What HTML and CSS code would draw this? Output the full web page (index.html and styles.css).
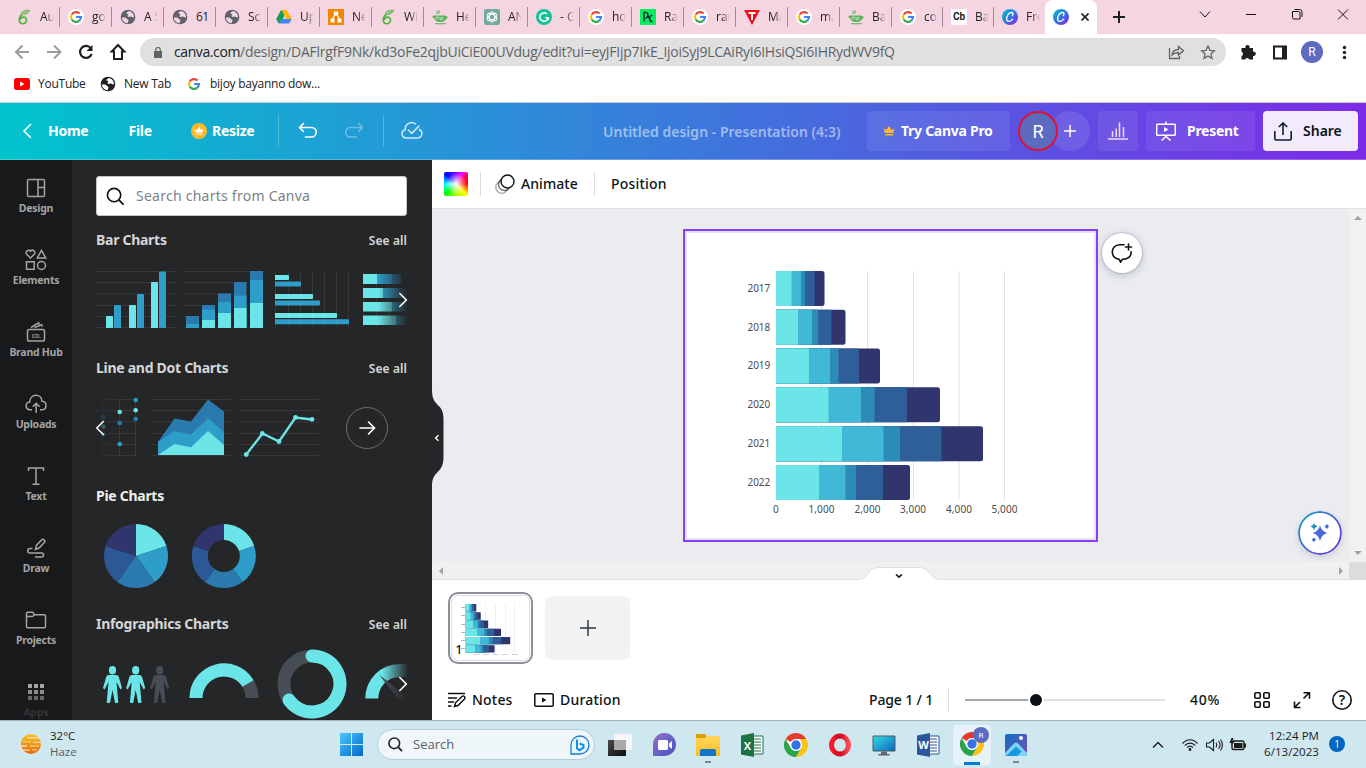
FILE: index.html
```html
<!DOCTYPE html>
<html lang="en">
<head>
<meta charset="utf-8">
<title>Untitled design - Presentation (4:3)</title>
<link rel="stylesheet" href="styles.css">
</head>
<body>
<svg class="sprite" aria-hidden="true">
  <defs>
    <linearGradient id="canvaGrad" x1="0" y1="0" x2="1" y2="1"><stop offset="0" stop-color="#00c4cc"/><stop offset=".45" stop-color="#2a7de0"/><stop offset="1" stop-color="#8b1fe8"/></linearGradient>
    <linearGradient id="fadeR" x1="0" x2="1"><stop offset="0" stop-color="#252627" stop-opacity="0"/><stop offset="1" stop-color="#252627"/></linearGradient>
    <linearGradient id="fadeL" x1="0" x2="1"><stop offset="0" stop-color="#252627"/><stop offset="1" stop-color="#252627" stop-opacity="0"/></linearGradient>
    <linearGradient id="sparkGrad" x1="0" y1="0" x2="1" y2="1"><stop offset="0" stop-color="#12a5b5"/><stop offset=".5" stop-color="#4a63dd"/><stop offset="1" stop-color="#7430d8"/></linearGradient>
    <linearGradient id="sunGrad" x1="0" y1="0" x2="0" y2="1"><stop offset="0" stop-color="#f9c51b"/><stop offset="1" stop-color="#e8660c"/></linearGradient>
    <linearGradient id="winGrad" x1="0" y1="0" x2="1" y2="1"><stop offset="0" stop-color="#4cc8fb"/><stop offset="1" stop-color="#0067c8"/></linearGradient>
    <linearGradient id="operaGrad" x1="0" x2="1"><stop offset="0" stop-color="#ff1b2d"/><stop offset=".5" stop-color="#c8081c"/><stop offset="1" stop-color="#ff4a52"/></linearGradient>
    <linearGradient id="chatGrad" x1="0" y1="0" x2="1" y2="1"><stop offset="0" stop-color="#9a6fc0"/><stop offset=".5" stop-color="#6a62c8"/><stop offset="1" stop-color="#4a50c0"/></linearGradient>
    <linearGradient id="screenGrad" x1="0" y1="0" x2="1" y2="1"><stop offset="0" stop-color="#35dbe4"/><stop offset="1" stop-color="#0a66c0"/></linearGradient>
    <linearGradient id="photoGrad" x1="0" y1="0" x2="1" y2="1"><stop offset="0" stop-color="#0f6fc5"/><stop offset="1" stop-color="#7c4bb0"/></linearGradient>
    <linearGradient id="folderGrad" x1="0" y1="0" x2="0" y2="1"><stop offset="0" stop-color="#ffd75a"/><stop offset="1" stop-color="#fcbc24"/></linearGradient>
    <linearGradient id="darkGrad" x1="0" y1="0" x2="1" y2="1"><stop offset="0" stop-color="#4a4a4a"/><stop offset="1" stop-color="#0c0c0c"/></linearGradient>
  </defs>
  <symbol id="google" viewBox="0 0 16 16"><circle cx="8" cy="8" r="8" fill="#fff"/><g fill="none" stroke-width="2.2"><path d="M11.6 4.6A5 5 0 0 0 3.7 5.5" stroke="#ea4335"/><path d="M3.7 5.5a5 5 0 0 0 0 5" stroke="#fbbc05"/><path d="M3.7 10.5a5 5 0 0 0 7.6 1.2" stroke="#34a853"/><path d="M8 8h5a5 5 0 0 1-1.7 3.7" stroke="#4285f4"/></g></symbol>
  <symbol id="globe" viewBox="0 0 16 16"><circle cx="8" cy="8" r="7.3" fill="currentColor"/><path d="M1.800 8.500c2-.2 4.200-.3 4.700.9.500 1.200 2 .7 2 2 0 .8-.9 1.300-.8 2.800A6 6 0 0 1 1.800 8.500zM9 2c-.8.800-2.800 1-2.600 2.200.2.900 1.700.4 1.900 1.300.2 1-1.300 1.100-.6 2 .8 1 1.900-.2 3.200 0 1 .2 1.300 1.300 3.100.8A6 6 0 0 0 9 2z" fill="var(--cut)"/></symbol>
  <symbol id="six" viewBox="0 0 16 16"><path d="M6 5.500C3.300 7.500 2.600 11 3.600 13c1.100 2.200 4.300 2.200 5.900.7 1.900-1.900 1.100-5-1.200-5.500-1.800-.3-3.600 1-4.300 2.600" fill="none" stroke="#4fb53b" stroke-width="1.700"/><path d="M5.500 6C4.500 3 8 .8 13.800 1.200 12.500 4.500 9.500 5.500 5.500 6z" fill="#6cc35a" stroke="#4fb53b" stroke-width=".6"/><path d="M6 5.300c1.500-1.500 3-2.300 5-2.800" stroke="#f6d5e3" stroke-width=".8" fill="none"/></symbol>
  <symbol id="cup" viewBox="0 0 16 16"><path d="M2 6.500h11l1.200.8 1.300.2-.3 2-2 1.300C12.500 12.300 11 13 8 13s-4.700-1.200-5.300-3L.5 8.300l.3-1.200z" fill="#55b257"/><path d="M3 14.800h11M7 5c-1.500-1.400 1-2 .1-3.800M5 4.500C4 3.500 5.400 3 4.900 1.800" stroke="#55b257" stroke-width="1.100" fill="none"/><path d="M4 8v2.500M4 8h2M6 8v2.500M8 8v2.500h1.600V8M11 8v2.500" stroke="#f6d5e3" stroke-width=".8" fill="none"/></symbol>
  <symbol id="canva" viewBox="0 0 16 16"><circle cx="8" cy="8" r="8" fill="url(#canvaGrad)"/><path d="M10.300 6.600c1.300-1.300.9-3.300-.9-3.100C6.500 3.800 4.300 7.300 4.600 10.200c.3 3.100 4 2.900 6.200 0" fill="none" stroke="#fff" stroke-width="1.300" stroke-linecap="round"/></symbol>
  <symbol id="chrome" viewBox="0 0 24 24"><circle cx="12" cy="12" r="12" fill="#fff"/><path d="M1.600 6A12 12 0 0 1 22.400 6H12a6 6 0 0 0-5.200 3z" fill="#e33b2e"/><path d="M22.400 6A12 12 0 0 1 12 24l5.200-9a6 6 0 0 0 0-6L16 6z" fill="#fbc21a"/><path d="M1.600 6A12 12 0 0 0 12 24l5.200-9A6 6 0 0 1 6.800 15z" fill="#2ba24c"/><circle cx="12" cy="12" r="5.800" fill="#fff"/><circle cx="12" cy="12" r="4.700" fill="#3273e8"/></symbol>
  <symbol id="crown" viewBox="0 0 12 10"><path d="M.5 2.200l2.700 1.900L6 0l2.800 4.100 2.700-1.900L10.300 7H1.700zM1.900 8h8.200v1.500H1.900z" fill="currentColor"/></symbol>
</svg>

<header class="browser">
  <div class="tabs">
    <div class="tab"><svg class="fav"><use href="#six"/></svg><span>Au</span></div>
    <div class="tab"><svg class="fav"><use href="#google"/></svg><span>go</span></div>
    <div class="tab"><svg class="fav grey"><use href="#globe"/></svg><span>A S</span></div>
    <div class="tab"><svg class="fav grey"><use href="#globe"/></svg><span class="whole">61</span></div>
    <div class="tab"><svg class="fav grey"><use href="#globe"/></svg><span>Sc</span></div>
    <div class="tab"><svg class="fav" viewBox="0 0 16 16"><path d="M5.300 1h5.400L5.300 14H2.800L.3 10z" fill="#1ea362"/><path d="M5.300 1h5.400l5 9h-5.200z" fill="#ffba00"/><path d="M2.800 14.500L5.400 10h10.300l-2.600 4.500z" fill="#4285f4"/><path d="M.3 10L5.300 1 8 5.600 2.800 14.500z" fill="#12a05c"/></svg><span>Up</span></div>
    <div class="tab"><svg class="fav" viewBox="0 0 16 16"><path d="M0 0h16v16H0z" fill="#f08705"/><path d="M8 4L4 11M8 4l4 7" fill="none" stroke="#fff" stroke-width="1.200"/><path d="M5.800 2.500h4.400v4H5.800zM2.500 9.500h4v4h-4zM9.500 9.500h4v4h-4z" fill="#fff"/></svg><span>Ne</span></div>
    <div class="tab"><svg class="fav"><use href="#six"/></svg><span>Wi</span></div>
    <div class="tab"><svg class="fav"><use href="#cup"/></svg><span>He</span></div>
    <div class="tab"><svg class="fav" viewBox="0 0 16 16"><rect width="16" height="16" rx="2" fill="#74aa9c"/><g fill="none" stroke="#fff" stroke-width=".9"><ellipse cx="8" cy="8" rx="2.700" ry="5.300"/><ellipse cx="8" cy="8" rx="2.700" ry="5.300" transform="rotate(60 8 8)"/><ellipse cx="8" cy="8" rx="2.700" ry="5.300" transform="rotate(120 8 8)"/></g></svg><span>AN</span></div>
    <div class="tab"><svg class="fav" viewBox="0 0 16 16"><circle cx="8" cy="8" r="8" fill="#15c39a"/><path d="M10.800 4.900a4.200 4.200 0 1 0 1.400 3.800H9.300M12.200 8.500v2.600" fill="none" stroke="#fff" stroke-width="1.500"/></svg><span>- G</span></div>
    <div class="tab"><svg class="fav"><use href="#google"/></svg><span>ho</span></div>
    <div class="tab"><svg class="fav" viewBox="0 0 16 16"><path d="M0 0h16v16H0z" fill="#03ef62"/><path d="M4 12.500V3.500c4.500-1 5.500 3.500 1.500 6M12.500 6.500c-2.500-.5-4 3-2 5l2 1.500M8 7l3 6" fill="none" stroke="#05192d" stroke-width="1.300"/></svg><span>Ra</span></div>
    <div class="tab"><svg class="fav"><use href="#google"/></svg><span>ran</span></div>
    <div class="tab"><svg class="fav" viewBox="0 0 16 16"><path d="M0 1h16L8 16z" fill="#f30b16"/><path d="M4.500 4h7M8 4v7" stroke="#fff" stroke-width="2"/></svg><span>Ma</span></div>
    <div class="tab"><svg class="fav"><use href="#google"/></svg><span>ma</span></div>
    <div class="tab"><svg class="fav"><use href="#cup"/></svg><span>Ba</span></div>
    <div class="tab short"><svg class="fav"><use href="#google"/></svg><span>co</span></div>
    <div class="tab short"><b class="fav cb">Cb</b><span>Ba</span></div>
    <div class="tab short last"><svg class="fav"><use href="#canva"/></svg><span>Fre</span></div>
    <div class="tab active"><svg class="fav"><use href="#canva"/></svg><svg class="close" viewBox="0 0 8 8"><path d="M.5.5l7 7m0-7l-7 7" stroke="#222" stroke-width="1.700"/></svg></div>
    <svg class="newtab" viewBox="0 0 12 12"><path d="M6 0v12M0 6h12" stroke="#1f1f1f" stroke-width="2"/></svg>
    <svg class="winctl" viewBox="1190 0 176 34"><g fill="none" stroke="#111" stroke-width="1"><path d="M1200 11.500l5 5.500 5-5.500M1246 14.500h10M1292.500 11.500h6q1.500 0 1.500 1.500v6h-6q-1.500 0-1.500-1.500zM1294.500 9.500h5q2.500 0 2.500 2.500v5M1338 9.500l10 10m0-10l-10 10"/></g></svg>
  </div>
  <div class="navbar">
    <svg class="navicons" viewBox="0 34 140 36"><g fill="none" stroke="#9b9b9b" stroke-width="2"><path d="M29 52H16.500M22.500 45.500L16 52l6.500 6.500M47 52h13M54 45.500l6.500 6.500-6.500 6.500"/></g><path d="M91 48.500a6 6 0 1 0 .7 5.500" fill="none" stroke="#1f1f1f" stroke-width="2.200"/><path d="M92.500 45v6h-6z" fill="#1f1f1f"/><path d="M118 45l-6.300 6.500h2.300V59h8v-7.500h2.300z" fill="none" stroke="#1f1f1f" stroke-width="2"/></svg>
    <div class="omnibox">
      <svg class="lock" viewBox="0 0 8 11"><path d="M0 4h8v7H0z" fill="#5f6368"/><path d="M1.700 4V2.800a2.300 2.300 0 0 1 4.600 0V4" fill="none" stroke="#5f6368" stroke-width="1.200"/></svg>
      <span class="url"><b>canva.com</b>/design/DAFlrgfF9Nk/kd3oFe2qjbUiCiE00UVdug/edit?ui=eyJFIjp7IkE_IjoiSyJ9LCAiRyI6IHsiQSI6IHRydWV9fQ</span>
      <svg class="omnicons" viewBox="1166 38 54 28"><g fill="none" stroke="#5f6368" stroke-width="1.300"><path d="M1169.500 48v10.500h10V56M1172 55c.5-4 3-5.500 6.500-5.500V46.500l5 4.200-5 4.300v-2.500c-2.500 0-4.500.5-6.500 2.500z"/><path d="M1208 46l1.900 4.300 4.500.4-3.400 3.100 1 4.600-4-2.400-4 2.400 1-4.600-3.400-3.100 4.500-.4z"/></g></svg>
    </div>
    <svg class="exticons" viewBox="1226 34 140 36"><path d="M1241.500 48h4a2.200 2.200 0 1 1 4 0h3.500v3.700a2.200 2.200 0 1 1 0 4.200v3.600h-3.700a2.200 2.200 0 0 0-4.200 0h-3.600V56a2.200 2.200 0 0 0 0-4.200z" fill="#1f1f1f"/><path d="M1274 46.500h12v12h-12z" fill="#fff" stroke="#1f1f1f" stroke-width="2"/><path d="M1282 46h5v13h-5z" fill="#1f1f1f"/><circle cx="1312" cy="52" r="11" fill="#5c6bc0"/><text x="1312" y="56.300" class="profile">R</text><g fill="#1f1f1f"><circle cx="1344.500" cy="47.500" r="1.700"/><circle cx="1344.500" cy="52.500" r="1.700"/><circle cx="1344.500" cy="57.500" r="1.700"/></g></svg>
  </div>
  <nav class="bookmarks">
    <svg class="yt" viewBox="0 0 16 12"><rect width="16" height="12" rx="2.500" fill="#f00"/><path d="M6 3.500v5l4.500-2.500z" fill="#fff"/></svg><span class="bm1">YouTube</span>
    <svg class="fav dark"><use href="#globe"/></svg><span class="bm2">New Tab</span>
    <svg class="fav"><use href="#google"/></svg><span class="bm3">bijoy bayanno dow...</span>
  </nav>
</header>

<div class="appbar">
  <svg class="back" viewBox="0 0 10 16"><path d="M8.500 1.500L2 8l6.500 6.500" fill="none" stroke="#fff" stroke-width="1.600" stroke-linecap="round"/></svg>
  <span class="home">Home</span><span class="file">File</span>
  <span class="crownbadge"><svg viewBox="0 0 12 10"><use href="#crown"/></svg></span><span class="resize">Resize</span>
  <i class="vline"></i>
  <svg class="hist" viewBox="290 103 140 56"><g fill="none" stroke="#fff" stroke-width="1.600" stroke-linecap="round" stroke-linejoin="round"><path d="M303.500 123.500l-4 4 4 4M300 127.500h11.500a4.700 4.700 0 0 1 0 9.500h-6"/><path opacity=".35" d="M358.500 123.500l4 4-4 4M362 127.500h-11.500a4.700 4.700 0 0 0 0 9.500h6"/><path opacity=".25" stroke-width="1" stroke-linecap="butt" d="M383.500 115v32"/><path opacity=".8" stroke-width="1.500" d="M419.500 129.500c4 2.500 2.800 8.500-2.500 8.500h-10c-6 0-6.700-6.700-1.800-8.300-.5-6 6.300-9 10.300-5.700M408.500 130l3.200 3.400L419 126"/></g></svg>
  <span class="title">Untitled design - Presentation (4:3)</span>
  <span class="btn pro"><svg viewBox="0 0 12 10"><use href="#crown"/></svg><span>Try Canva Pro</span></span>
  <span class="people"><span class="avatar">R</span><span class="invite"><svg viewBox="0 0 12 12"><path d="M6 0v12M0 6h12" stroke="#fff" stroke-width="1.500"/></svg></span></span>
  <span class="btn stats"><svg viewBox="0 0 20 18"><path d="M0 17h20M4.500 15V9M8.200 15V6.500M11.500 15V.5M15.500 15V5" stroke="#eadcff" stroke-width="1.500"/></svg></span>
  <span class="btn present"><svg viewBox="0 0 20 20"><path d="M1.500 3.200h17q.8 0 .8.800v9.500q0 .8-.8.800h-17q-.8 0-.8-.8V4q0-.8.8-.8zM10 .5v2.500M5.500 19.500l4.500-4 4.500 4" fill="none" stroke="#fff" stroke-width="1.500"/><path d="M8 6l4.500 2.500L8 11z" fill="#fff"/></svg><span>Present</span></span>
  <span class="btn share"><svg viewBox="0 0 18 19"><path d="M.8 9v7.500q0 1.500 1.500 1.500h13.400q1.500 0 1.500-1.500V9M9 13V1M4.800 5L9 1l4.200 4" fill="none" stroke="#111b26" stroke-width="1.600"/></svg><span>Share</span></span>
</div>

<main class="editor">
  <nav class="rail">
    <a><svg viewBox="0 0 24 24"><g><rect x="3.500" y="3.500" width="17" height="17" rx="1.500"/><path d="M14 3.500v17M14 11.500h6.500"/></g></svg>Design</a>
    <a><svg viewBox="0 0 24 24"><path d="M6.500 10L2.700 6.200a2.400 2.400 0 0 1 3.800-3 2.400 2.400 0 0 1 3.800 3zM17.500 2.300L21.700 10h-8.400zM2.500 13.800h7.700v7.400H2.500z"/><circle cx="17.500" cy="17.500" r="4"/></svg>Elements</a>
    <a><svg viewBox="0 0 24 24"><rect x="3.500" y="9.500" width="17" height="11.500" rx="1.800"/><path d="M7 7.500l7.500-4.600 1 1.600M10.500 7.500l7-2.800 1 2"/><text x="12.200" y="17.500">CO.</text></svg>Brand Hub</a>
    <a><svg viewBox="0 0 24 24"><path d="M8 17.800H6.500c-5.500 0-5.800-7.300-.8-7.800C6 1 17.500 1 18 9.300c5.500.3 5.300 8.500-.5 8.500H16M12.200 21v-9.300M8.800 14.700l3.400-3.300 3.400 3.300"/></svg>Uploads</a>
    <a><svg viewBox="0 0 24 24"><path d="M4.500 7V4h15v3M12 4v16.300M8.500 20.300h7"/></svg>Text</a>
    <a><svg viewBox="0 0 24 24"><path d="M8.500 12.500H6c-3 0-3 4.500 0 4.500h11.500c3 0 2.700 4-.2 4H11M11.500 13.500l1-4.300 5-5.200c1.800-1.800 4.500.8 2.800 2.600l-5 5.200z"/></svg>Draw</a>
    <a><svg viewBox="0 0 24 24"><path d="M2.500 18.500V5.500q0-1.200 1.200-1.200h5l2 2.500h9.600q1.200 0 1.200 1.200v10.500q0 1.200-1.200 1.200H3.700q-1.200 0-1.200-1.200zM2.500 8.500h6l2-1.700"/></svg>Projects</a>
    <a class="apps"><svg viewBox="0 0 24 24"><path d="M4 4h4v4H4zM10 4h4v4h-4zM16 4h4v4h-4z" fill="#a4a5a6"/><path d="M4 10h4v4H4zM10 10h4v4h-4zM16 10h4v4h-4z" fill="#8b8c8d"/><path d="M4 16h4v4H4zM10 16h4v4h-4zM16 16h4v4h-4z" fill="#68696a"/></svg>Apps</a>
  </nav>

  <aside class="panel">
    <div class="search"><svg viewBox="0 0 20 20"><circle cx="8.500" cy="8.500" r="7" fill="none" stroke="#0d1216" stroke-width="1.700"/><path d="M13.500 13.500l5 5" stroke="#0d1216" stroke-width="1.900"/></svg><span>Search charts from Canva</span></div>

    <section><h2>Bar Charts</h2><span class="all">See all</span>
      <svg class="thumbs" viewBox="96 260 312 80">
        <path class="rule" d="M96 271.500h80M96 282.500h80M96 294h80M96 305.500h80M96 316.500h80M96 327.500h80M184 271.500h80M184 282.500h80M184 294h80M184 305.500h80M184 316.500h80M184 327.500h80"/>
        <path class="c1" d="M106 328v-11q0-1 1-1h5q1 0 1 1v11zM129 328v-22q0-1 1-1h5q1 0 1 1v22zM151 328v-45q0-1 1-1h5q1 0 1 1v45z"/>
        <path class="c2" d="M114 328v-22q0-1 1-1h5q1 0 1 1v22zM137 328v-33q0-1 1-1h5q1 0 1 1v33zM159 328v-55.500q0-1 1-1h5q1 0 1 1V328z"/>
        <path class="c3" d="M186 328v-12h13v12zM202 328v-23h13v23zM218 328v-34.500h13V328zM234 328v-46h12.500v46zM250 328v-57h13v57z"/>
        <path class="c2" d="M186 328v-4h13v4zM202 328v-18.500h13V328zM218 328v-26h13v26zM234 328v-32.500h12.500V328zM250 328v-48h13v48z"/>
        <path class="c1" d="M202 328v-8h13v8zM218 328v-15h13v15zM234 328v-20h12.500v20zM250 328v-25h13v25z"/>
        <path class="rule" d="M275.500 272v55M288.500 272v55M300.500 272v55M312.500 272v55M324.500 272v55M336.500 272v55M348.500 272v55M363.500 272v55M376.500 272v55M388.500 272v55"/>
        <path class="c1" d="M275 275h13q1 0 1 1v3q0 1-1 1h-13zM275 294h37q1 0 1 1v3q0 1-1 1h-37zM275 313h61q1 0 1 1v3q0 1-1 1h-61z"/>
        <path class="c2" d="M275 281.500h25q1 0 1 1v3q0 1-1 1h-25zM275 300.500h44q1 0 1 1v3q0 1-1 1h-44zM275 319.300h73q1 0 1 1v3q0 1-1 1h-73z"/>
        <path class="c3" d="M391 274h10v10h-10zM397 288h10v10h-10z"/><path class="c2" d="M377 274h15v10h-15zM383 288h15v10h-15zM392 302h15v9.500h-15zM396 315.500h11v9.500h-11z"/>
        <path class="c1" d="M363 274h14v10h-14zM363 288h20v10h-20zM363 302h29v9.500h-29zM363 315.500h33v9.500h-33z"/>
        <path d="M378 268h30v62h-30z" fill="url(#fadeR)"/><path class="arrow" d="M399.800 293.500l6.500 6.500-6.500 6.500"/>
      </svg></section>

    <section><h2>Line and Dot Charts</h2><span class="all">See all</span>
      <svg class="thumbs" viewBox="96 388 312 80">
        <path class="rule" d="M96 399.500h41M96 410.500h41M96 422h41M96 433.500h41M96 444.500h41M96 455.500h41M103 399v57M119.500 399v57M135.500 399v57M151 399.500h80M151 410.500h80M151 422h80M151 433.500h80M151 444.500h80M151 455.500h80M239 399.500h80M239 410.500h80M239 422h80M239 433.500h80M239 444.500h80M239 455.500h80"/>
        <circle class="c3" cx="103" cy="417" r="2.300"/><circle class="c1" cx="103" cy="426.500" r="2.300"/><circle class="c2" cx="103" cy="434.500" r="2.300"/>
        <path d="M96 390h24v70H96z" fill="url(#fadeL)"/>
        <circle class="c1" cx="119.700" cy="412" r="2.300"/><circle class="c3" cx="119.700" cy="423" r="2.300"/><circle class="c2" cx="119.700" cy="444" r="2.300"/><circle class="c2" cx="135.700" cy="400" r="2.300"/><circle class="c1" cx="135.700" cy="410.200" r="2.300"/><circle class="c3" cx="135.700" cy="419" r="2.300"/>
        <path class="arrow" d="M103.300 421.500L96.800 428l6.500 6.500"/>
        <path class="c3" d="M158 455v-13l16.500-23.500 16.500 3 17-22 16 12V455z"/><path class="c2" d="M158 455v-13l16.500-11 16.500 3.500 17-16.200L224 432v23z"/><path class="c1" d="M158 455l16.500-11 16.500 3.200 17-16.200 16 14v10z"/>
        <path d="M246.300 454.500l16.200-21 16.500 8 16.500-24 16.500 2" fill="none" stroke="#6ce5e8" stroke-width="2.300"/><g class="c1"><circle cx="246.300" cy="454.500" r="2.400"/><circle cx="262.300" cy="433.500" r="2.400"/><circle cx="279" cy="441.500" r="2.400"/><circle cx="295.500" cy="417.500" r="2.400"/><circle cx="312" cy="419.300" r="2.400"/></g>
        <circle cx="367" cy="428" r="20.500" fill="none" stroke="#6d6e6f"/><path class="arrow" d="M360 428h14M368.500 422l6 6-6 6"/>
      </svg></section>

    <section class="pies"><h2>Pie Charts</h2>
      <svg class="thumbs" viewBox="96 516 312 80">
        <g id="pie"><path fill="#6ce5e8" d="M136 556V524a32 32 0 0 1 30.430 22.110z"/><path fill="#2f9dc9" d="M136 556l30.430-9.890A32 32 0 0 1 154.810 581.890z"/><path fill="#2a7ab0" d="M136 556l18.810 25.890a32 32 0 0 1-37.620 0z"/><path fill="#2d5896" d="M136 556l-18.810 25.890A32 32 0 0 1 105.570 546.110z"/><path fill="#31356e" d="M136 556l-30.430-9.890A32 32 0 0 1 136 524z"/></g>
        <use href="#pie" x="87.800"/><circle cx="223.800" cy="556" r="16" fill="#252627"/>
      </svg></section>

    <section><h2>Infographics Charts</h2><span class="all">See all</span>
      <svg class="thumbs" viewBox="96 644 312 80">
        <g id="person" fill="#6ce5e8"><ellipse cx="112.500" cy="670.300" rx="3.600" ry="4.200"/><path d="M109 675h7c2 0 2.500 1 3 2.500l3 10.500-1.500 1.500-4-7.500 1.800 20.700-3.300.3-2.500-13-2.500 13-3.300-.3 1.800-20.700-4 7.500-1.500-1.500 3-10.500c.5-1.500 1-2.500 3-2.500z"/></g>
        <use href="#person" x="23.200"/><g fill="#464d55"><ellipse cx="159.700" cy="670.300" rx="3.600" ry="4.200"/><path d="M156.200 675h7c2 0 2.500 1 3 2.500l3 10.500-1.500 1.500-4-7.500 1.800 20.700-3.300.3-2.500-13-2.500 13-3.300-.3 1.800-20.700-4 7.500-1.500-1.500 3-10.500c.5-1.500 1-2.500 3-2.500z"/></g>
        <g fill="none" stroke-width="13"><path stroke="#464d55" d="M196 698a28 28 0 0 1 56 0"/><path stroke="#6ce5e8" d="M196 698a28 28 0 0 1 52-14.500"/><circle cx="312" cy="684" r="28" stroke="#464d55"/><path stroke="#6ce5e8" stroke-linecap="round" d="M312 656a28 28 0 1 1-23 44"/><path stroke="#6ce5e8" d="M371.800 698.500a28 28 0 0 1 28-28h8"/></g>
        <path d="M379 674.500l24 19a4 4 0 0 1-5 5.500z" fill="#464d55"/><path d="M382 660h26v42h-26z" fill="url(#fadeR)"/><path class="arrow" d="M399.800 677.500l6.500 6.500-6.500 6.500"/>
      </svg></section>
  </aside>

  <div class="work">
    <div class="tools"><i class="swatch"></i><i class="div"></i><svg class="anim" viewBox="0 0 20 20"><g fill="#fff" stroke="#0d1216" stroke-width="1.400"><circle cx="6.800" cy="13.200" r="6" opacity=".35"/><circle cx="9.500" cy="10.500" r="6" opacity=".6"/><circle cx="12.500" cy="7.500" r="6.500"/></g></svg><span class="animate">Animate</span><i class="div"></i><span class="position">Position</span></div>
    <div class="stage">
      <svg class="page" viewBox="683 229 415 313">
        <path d="M684 230h413v311H684z" fill="#e3e5ea" stroke="#8b3dff" stroke-width="2"/><path d="M687 233h407v305H687z" fill="#fff"/>
        <path d="M821.500 271v229M867.500 271v229M913.500 271v229M959 271v229M1004.500 271v229" stroke="#e1e1e3"/>
        <g id="bars">
          <g fill="#31356e"><path d="M776 271h46q2.500 0 2.500 2.500v30q0 2.500-2.500 2.500h-46zM776 309.700h67q2.500 0 2.500 2.500v30q0 2.500-2.500 2.500h-67zM776 348.500h101.500q2.500 0 2.500 2.500v30q0 2.500-2.500 2.500H776zM776 387.300h161.500q2.500 0 2.500 2.500v30q0 2.500-2.500 2.500H776zM776 426.300h204.500q2.500 0 2.500 2.500v30q0 2.500-2.500 2.500H776zM776 465h131.500q2.500 0 2.500 2.500v30q0 2.500-2.500 2.500H776z"/></g>
          <path fill="#2f5f98" d="M776 271h38.500v35H776zM776 309.700h55.500v35H776zM776 348.500h83v35h-83zM776 387.300h131v35H776zM776 426.300h165.500v35H776zM776 465h107v35H776z"/>
          <path fill="#2d8bba" d="M776 271h29v35h-29zM776 309.700h42v35h-42zM776 348.500h62.500v35H776zM776 387.300h98.500v35H776zM776 426.300h124v35H776zM776 465h80v35h-80z"/>
          <path fill="#41b8d5" d="M776 271h25v35h-25zM776 309.700h36v35h-36zM776 348.500h54v35h-54zM776 387.300h85v35h-85zM776 426.300h107.500v35H776zM776 465h69.500v35H776z"/>
          <path fill="#6ce5e8" d="M776 271h15.500v35H776zM776 309.700h22v35h-22zM776 348.500h33v35h-33zM776 387.300h52.500v35H776zM776 426.300h66v35h-66zM776 465h43v35h-43z"/>
        </g>
        <g class="ylab"><text x="770" y="292">2017</text><text x="770" y="331">2018</text><text x="770" y="369">2019</text><text x="770" y="408">2020</text><text x="770" y="447">2021</text><text x="770" y="486">2022</text></g>
        <g class="xlab"><text x="776" y="513">0</text><text x="821.500" y="513">1,000</text><text x="867.500" y="513">2,000</text><text x="913" y="513">3,000</text><text x="959" y="513">4,000</text><text x="1004.500" y="513">5,000</text></g>
      </svg>
      <span class="comment"><svg viewBox="0 0 22 20"><path d="M13 1.700H8.500C-1 1.700-1 16 8 16.200l1.500 2.800 2-2.800c6 0 9-3 8.500-7.500M17.500 1v6M14.500 4h6" fill="none" stroke="#0d1216" stroke-width="1.600" stroke-linecap="round"/></svg></span>
      <svg class="magic" viewBox="0 0 44 44"><circle cx="22" cy="22" r="21" fill="#fff" stroke="url(#sparkGrad)" stroke-width="2"/><path d="M22 14.500q1.500 6 7.500 7.500-6 1.500-7.500 8-1.500-6.500-7.500-8 6-1.500 7.500-7.500z" fill="#4868dc"/><path d="M16 12q.6 3 3.500 3.500-2.900.5-3.500 3.500-.6-3-3.500-3.500 2.900-.5 3.500-3.500z" fill="#198fb5"/><path d="M29 13l2 2.500-2 2.500-2.500-2.500zM16 26.500l2 2.300-2 2.200-2.300-2.200z" fill="#4868dc"/></svg>
      <div class="vscroll"><svg viewBox="0 0 8 5"><path d="M0 5l4-4 4 4z" fill="#a3a3a3"/></svg><svg viewBox="0 0 8 5"><path d="M0 0l4 4 4-4z" fill="#a3a3a3"/></svg></div>
    </div>
    <div class="hscroll"><svg viewBox="0 0 5 8"><path d="M5 0L1 4l4 4z" fill="#a3a3a3"/></svg><svg viewBox="0 0 5 8"><path d="M0 0l4 4-4 4z" fill="#a3a3a3"/></svg><i></i>
      <svg class="bump" viewBox="855 566 88 15"><path d="M855 579.500c8 0 9.500-2 13-6 3-3.500 5.500-6 11-6h40c5.500 0 8 2.500 11 6 3.500 4 5 6 13 6v1.500h-88z" fill="#fff"/><path d="M855 579.500c8 0 9.500-2 13-6 3-3.500 5.500-6 11-6h40c5.500 0 8 2.500 11 6 3.500 4 5 6 13 6" fill="none" stroke="#dddee0"/><path d="M896 574.500l3 2.700 3-2.700" fill="none" stroke="#111" stroke-width="1.600"/></svg>
    </div>
    <div class="pages">
      <div class="pagethumb"><svg viewBox="448 592 85 72">
        <rect x="451.500" y="595.500" width="78" height="65" rx="6" fill="#fff" stroke="#dadde3"/>
        <path d="M485.500 604v48M495.500 604v48M505.500 604v48M514.500 604v48" stroke="#f1f1f3"/><path d="M461 607.500h4M461 615.500h4M461 624.500h4M461 632.500h4M461 640.500h4M461 648.500h4" stroke="#b7b9bd"/><path d="M474 654.500h6M483 654.500h6M493 654.500h6M502 654.500h6M512 654.500h6" stroke="#d0d1d4"/>
        <use href="#bars" transform="translate(299.400 546.800) scale(.2145 .2115)"/><text x="455.500" y="654" class="num">1</text></svg></div>
      <div class="addpage"><svg viewBox="0 0 16 16"><path d="M8 0v16M0 8h16" stroke="#33373d" stroke-width="1.500"/></svg></div>
    </div>
    <footer class="status">
      <svg class="ni" viewBox="0 0 18 16"><path d="M0 1.500h17M0 6h9M0 10h6M0 14h3.500M6.500 14.500l1-3.700L14 4.500q1.300-1 2.400 0t.1 2.500L10 13.500z" fill="none" stroke="#0d1216" stroke-width="1.500"/></svg><span class="notes">Notes</span>
      <svg class="di" viewBox="0 0 20 14"><rect x=".8" y=".8" width="18.400" height="12.400" rx="1.200" fill="none" stroke="#0d1216" stroke-width="1.500"/><path d="M8 4.500v5l4.500-2.500z" fill="#0d1216"/></svg><span class="duration">Duration</span>
      <span class="count">Page 1 / 1</span><i class="div"></i>
      <div class="slider"><i class="done"></i><b></b><i class="rest"></i></div><span class="zoom">40%</span>
      <svg class="end" viewBox="1250 684 104 32"><g fill="none" stroke="#0d1216" stroke-width="1.600"><rect x="1254.800" y="692.800" width="5.400" height="5.400" rx="1"/><rect x="1263.800" y="692.800" width="5.400" height="5.400" rx="1"/><rect x="1254.800" y="701.800" width="5.400" height="5.400" rx="1"/><rect x="1263.800" y="701.800" width="5.400" height="5.400" rx="1"/><path d="M1303.500 698.500l5.500-5.500M1303.500 692.800h6v6M1300 702l-5.500 5.500M1294.500 701.500v6h6"/><circle cx="1342" cy="700" r="9.200"/></g><text x="1342" y="705" class="q">?</text></svg>
    </footer>
  </div>
  <svg class="handle" viewBox="430 390 15 97"><path d="M432 390c0 18 11.500 12 11.500 29v38c0 18-11.500 12-11.500 30h-2v-97z" fill="#252627" /><path d="M438.500 435.300l-3 2.700 3 2.700" fill="none" stroke="#fff" stroke-width="1.400"/></svg>
</main>

<footer class="taskbar">
  <svg class="sun" viewBox="0 0 24 22"><circle cx="12" cy="11" r="10" fill="url(#sunGrad)"/><path d="M8 4.800h15M14 9.300h8M0 13h8M1 17.200h10" stroke="#f3e3c0" stroke-width="1.300"/><path d="M4 8.800h8M11 13h9M13 16.800h5" stroke="#fbe3a8" stroke-width="1"/></svg>
  <div class="weather"><span>32°C</span><span class="dim">Haze</span></div>
  <svg class="win" viewBox="0 0 23 23"><path d="M0 0h11v11H0zM12 0h11v11H12zM0 12h11v11H0zM12 12h11v11H12z" fill="url(#winGrad)"/></svg>
  <div class="tsearch"><svg viewBox="0 0 16 16"><circle cx="6.700" cy="6.700" r="5.700" fill="none" stroke="#222" stroke-width="1.700"/><path d="M11 11l4 4" stroke="#222" stroke-width="2"/></svg><span>Search</span><svg class="bing" viewBox="0 0 20 20"><path d="M1 19V10a9 9 0 1 1 9 9z" fill="#e8f6fd" stroke="#1879d8" stroke-width="1.300"/><path d="M7 4.500v9l2.500 1.700 4-2.500V10L9.500 8.500" fill="none" stroke="#148ee2" stroke-width="2"/></svg></div>
  <div class="apps-row">
    <svg viewBox="0 0 28 28"><path d="M8 3h18v16H8z" fill="#f6f6f6"/><path d="M2 9h18v16H2z" fill="url(#darkGrad)"/><path d="M8 9h12v10H8z" fill="#a9a9a9"/></svg>
    <svg viewBox="0 0 28 28"><path d="M3 25V14A11.500 11.500 0 1 1 14.500 25z" fill="url(#chatGrad)"/><rect x="8" y="9" width="10" height="10" rx="1.500" fill="#fff"/><path d="M19 12.500l3-2.500v8l-3-2.500z" fill="#fff"/></svg>
    <svg viewBox="0 0 28 28"><path d="M2 3h9l2 3v6H2z" fill="#dda000"/><path d="M2 7h9l2-2h13v20H2z" fill="url(#folderGrad)"/><path d="M6 25v-5q0-2 2-2h12q2 0 2 2v5z" fill="#1075c6"/></svg>
    <svg viewBox="0 0 28 28"><path d="M14 5h11v18H14z" fill="#fff" stroke="#1e7145"/><path d="M16 8h7M16 11h7M16 14h7M16 17h7M16 20h7" stroke="#1e7145"/><path d="M3 4.500L16 2v24L3 23.500z" fill="#1e7145"/><text x="9.500" y="18.500" class="office">X</text></svg>
    <svg viewBox="0 0 28 28"><use href="#chrome" x="2" y="2" width="24" height="24"/></svg>
    <svg viewBox="0 0 28 28"><ellipse cx="14" cy="14" rx="8.500" ry="9" fill="none" stroke="url(#operaGrad)" stroke-width="5"/></svg>
    <svg viewBox="0 0 28 28"><path d="M3 5h22v15H3z" fill="url(#screenGrad)" stroke="#555b60"/><path d="M11 20.500h6v2.500h2.500v1.500h-11V23H11z" fill="#60676d"/></svg>
    <svg viewBox="0 0 28 28"><path d="M14 5h11v18H14z" fill="#fff" stroke="#2b579a"/><path d="M16 8h7M16 11h7M16 14h7M16 17h7M16 20h7" stroke="#2b579a"/><path d="M3 4.500L16 2v24L3 23.500z" fill="#2b579a"/><text x="9.500" y="18" class="office">W</text></svg>
    <span class="current"><svg viewBox="0 0 38 38"><use href="#chrome" x="7" y="7" width="24" height="24"/><circle cx="28" cy="10" r="8" fill="#5c6bc0"/><text x="28" y="13" class="mini">R</text></svg></span>
    <svg viewBox="0 0 28 28"><rect x="3" y="3" width="22" height="22" rx="2" fill="url(#photoGrad)"/><circle cx="19" cy="7" r="2" fill="#fff"/><path d="M3 24v-2l9-9.500q2-2 4 0l9 9.500v1q0 2-2 2H5z" fill="#7bd5f5"/><path d="M4 25l10-9.500 5.500 5-4 4.500z" fill="#1799e2"/></svg>
  </div>
  <svg class="tray" viewBox="1146 720 108 48"><g fill="none" stroke="#1b1b1b" stroke-width="1.400"><path d="M1154 746.500l5-5 5 5"/><path stroke-width="1.200" d="M1183.500 742.500c4.500-5 10.500-5 15 0M1185.800 744.700c3-3.500 7.500-3.500 10.500 0M1188 746.700c2-2.200 4-2.200 6 0"/><path stroke-width="1.100" d="M1207.500 742h3l4-3.500v11l-4-3.500h-3zM1217 741.500c1 1.500 1 3.500 0 5M1219.500 740c2 2.500 2 5.500 0 8M1221.500 738.500c2.500 3 2.500 8 0 11"/><rect x="1233" y="740" width="12" height="8.500" rx="1.500"/></g><circle cx="1191" cy="748.500" r="1.400" fill="#1b1b1b"/><path d="M1235 742h8.500v5h-8.500zM1245 742.500h2v4h-2zM1232.500 737l-2 5h2.500l-1 3 4-5h-2.500l1-3z" fill="#1b1b1b"/></svg>
  <div class="clock"><span>12:24 PM</span><span>6/13/2023</span></div>
  <span class="badge">1</span>
</footer>
</body>
</html>
```
FILE: styles.css
```css
* { box-sizing: border-box; }
body { margin: 0; width: 1366px; height: 768px; overflow: hidden; font: 600 14px/20px "Noto Sans", "Open Sans", sans-serif; color: #0d1216; display: flex; flex-direction: column; }
svg { display: block; flex: none; }
span { white-space: nowrap; }
.sprite { position: absolute; width: 0; height: 0; }

/* browser chrome */
.browser { height: 103px; flex: none; background: #fff; font: 400 12px/16px "Open Sans", sans-serif; color: #202124; border-bottom: 1px solid #c9c9c9; }
.tabs { height: 34px; background: #f6d5e3; display: flex; padding-left: 8px; align-items: center; }
.tab { width: 52px; height: 20px; display: flex; align-items: center; padding-left: 8px; border-right: 1px solid #a08c96; }
.tab > span { width: 19px; flex: none; margin: 0 -4px 0 8px; -webkit-mask-image: linear-gradient(90deg, #000 6px, transparent 14px); mask-image: linear-gradient(90deg, #000 6px, transparent 14px); }
.tab > .whole { -webkit-mask-image: none; mask-image: none; letter-spacing: -.5px; }
.tab.short { width: 51px; }
.tab.last { border-right-color: transparent; }
.fav { width: 16px; height: 16px; flex: none; }
.grey { color: #5f6368; --cut: #f6d5e3; }
.dark { color: #202124; --cut: #fff; }
.cb { background: #fff; font: 700 10px/16px Roboto, sans-serif; text-align: center; color: #222; }
.tab.active { height: 34px; background: #fff; border: 0; border-radius: 8px 8px 0 0; }
.close { width: 8px; height: 8px; margin-left: 12px; }
.newtab { width: 12px; height: 12px; margin-left: 16px; }
.winctl { width: 176px; height: 34px; margin-left: auto; }
.navbar { height: 36px; display: flex; align-items: center; }
.navicons { width: 140px; height: 36px; }
.omnibox { width: 1086px; height: 28px; border-radius: 14px; background: #e0e0e0; display: flex; align-items: center; padding: 0 6px 0 14px; color: #5f6368; font-size: 14px; }
.lock { width: 8px; height: 11px; }
.url { margin-left: 12px; letter-spacing: -.26px; }
.url b { font-weight: 400; color: #202124; letter-spacing: -.4px; }
.omnicons { width: 54px; height: 28px; margin-left: auto; }
.exticons { width: 140px; height: 36px; }
.profile { font: 400 12px Roboto, sans-serif; fill: #fff; text-anchor: middle; }
.bookmarks { height: 28px; display: flex; align-items: center; padding-left: 14px; letter-spacing: -.25px; }
.yt { width: 16px; height: 12px; }
.bm1 { width: 62px; margin-left: 8px; }
.bm2 { width: 62px; margin-left: 8px; }
.bm3 { margin-left: 8px; }

/* application bar */
.appbar { height: 57px; flex: none; background: linear-gradient(90deg, #00c4cc, #2b8fd8 36%, #4d62df 65%, #7d2ae8); border-bottom: 1px solid rgba(255,255,255,.25); display: flex; align-items: center; color: #fff; padding-left: 22px; font-weight: 700; letter-spacing: -.28px; }
.back { width: 10px; height: 16px; }
.home { width: 80.5px; margin-left: 16px; }
.file { width: 62.5px; }
.crownbadge { width: 16px; height: 16px; border-radius: 50%; background: #fdb92a; display: grid; place-items: center; }
.crownbadge svg { width: 10px; height: 8px; }
.resize { width: 66px; margin-left: 5px; }
.vline { width: 1px; height: 32px; background: rgba(255,255,255,.25); }
.hist { width: 140px; height: 56px; margin-left: 11px; }
.title { width: 264px; margin: 2px 0 0 173px; color: rgba(255,255,255,.52); font-weight: 600; letter-spacing: .02px; }
.btn { height: 40px; border-radius: 4px; background: rgba(255,255,255,.08); display: flex; align-items: center; }
.pro { width: 143px; padding-left: 16px; gap: 6px; }
.pro svg { width: 12px; height: 10px; color: #fdb92a; }
.people { width: 72px; margin-left: 8px; display: flex; }
.avatar { width: 40px; height: 40px; border-radius: 50%; border: 2px solid #db1436; background: #5c6bc0; display: grid; place-items: center; font: 400 18px Roboto, sans-serif; z-index: 1; }
.invite { width: 40px; height: 40px; margin-left: -8px; border-radius: 50%; background: rgba(255,255,255,.1); display: grid; place-items: center; }
.invite svg { width: 12px; height: 12px; }
.stats { width: 40px; margin-left: 8px; justify-content: center; }
.stats svg { width: 20px; height: 18px; }
.present { width: 109px; margin-left: 8px; padding-left: 10px; gap: 11px; }
.present svg { width: 20px; height: 20px; }
.share { width: 95px; margin-left: 8px; padding-left: 11px; gap: 11px; background: #f2eafd; color: #0d1216; font-weight: 600; letter-spacing: 0; }
.share svg { width: 18px; height: 19px; }

/* editor */
.editor { height: 560px; flex: none; display: flex; position: relative; }
.rail { width: 72px; background: #18191b; overflow: hidden; }
.rail a { height: 72px; display: flex; flex-direction: column; align-items: center; padding-top: 16px; font-size: 10.500px; font-weight: 700; line-height: 17px; letter-spacing: -.25px; color: #a4a5a6; }
.rail svg { width: 24px; height: 24px; fill: none; stroke: #a4a5a6; stroke-width: 1.5; }
.rail text { font: 700 5.5px "Open Sans", sans-serif; fill: #a4a5a6; stroke: none; text-anchor: middle; }
.rail .apps { color: #333436; }
.apps svg { stroke: none; }
.panel { width: 360px; background: #252627; padding: 16px 24px 0; overflow: hidden; }
.search { width: 311px; height: 40px; border: 1px solid #c3c5c8; border-radius: 3px; background: #fff; display: flex; align-items: center; padding-left: 9px; gap: 11px; color: #7b8189; font-weight: 400; letter-spacing: .25px; }
.search svg { width: 19px; height: 19px; }
section { width: 312px; height: 128px; display: grid; grid-template: 44px 80px / 1fr auto; align-items: center; }
h2 { margin: 4px 0 0; font-size: 14px; line-height: 20px; font-weight: 700; letter-spacing: -.28px; color: #d6d6d6; }
.pies h2 { color: #f0f0f0; }
.all { font-size: 12px; color: #d6d6d6; margin: 6px 1px 0 0; letter-spacing: .1px; }
.thumbs { width: 312px; height: 80px; grid-column: 1 / 3; }
.rule { stroke: #36383a; fill: none; }
.c1 { fill: #6ce5e8; }
.c2 { fill: #2f9dc9; }
.c3 { fill: #2a7ab0; }
.arrow { fill: none; stroke: #fff; stroke-width: 1.6; stroke-linecap: round; }
.handle { position: absolute; left: 430px; top: 230px; width: 15px; height: 97px; }

.work { width: 934px; display: flex; flex-direction: column; background: #fff; }
.tools { height: 49px; border-bottom: 1px solid #dfe0e3; display: flex; align-items: center; padding-left: 12px; font-weight: 500; }
.swatch { width: 24px; height: 24px; border-radius: 2px; background: radial-gradient(circle at 50% 50%, #fff, rgba(255,255,255,0) 65%), conic-gradient(from 45deg, #f06, #f00 45deg, #ff0 90deg, #7f0 150deg, #0f0 180deg, #0ff 225deg, #00f 270deg, #70f 310deg, #f0f 350deg, #f06); }
.div { width: 1px; height: 24px; background: #dcdde0; }
.swatch + .div { margin-left: 12px; }
.anim { width: 20px; height: 20px; margin-left: 14px; }
.animate { width: 73px; margin-left: 6px; letter-spacing: .05px; }
.position { margin-left: 16px; letter-spacing: .2px; }
.stage { height: 353px; background: #ebecf0; display: flex; padding-left: 251px; position: relative; }
.page { width: 415px; height: 313px; margin-top: 20px; }
.ylab, .xlab { font: 400 10px "Noto Sans", sans-serif; fill: #4a4b50; text-anchor: end; letter-spacing: -.1px; }
.xlab { text-anchor: middle; letter-spacing: .1px; }
.comment { width: 40px; height: 40px; margin: 24px 0 0 4px; border-radius: 50%; background: #fff; display: grid; place-items: center; box-shadow: 0 0 0 1px rgba(64,79,109,.2), 0 2px 8px rgba(64,79,109,.3); }
.comment svg { width: 22px; height: 20px; }
.magic { position: absolute; left: 866px; top: 302px; width: 44px; height: 44px; border-radius: 50%; box-shadow: 0 2px 6px rgba(64,79,109,.2); }
.vscroll { width: 17px; margin-left: auto; background: #f1f1f1; display: flex; flex-direction: column; justify-content: space-between; align-items: center; padding: 6px 0; }
.vscroll svg { width: 8px; height: 5px; }
.hscroll { height: 18px; background: #f0f0f0; border-bottom: 1px solid #dddee0; display: flex; align-items: center; padding-left: 6px; position: relative; }
.hscroll svg { width: 5px; height: 8px; }
.hscroll svg + svg { margin-left: 896px; }
.hscroll i { width: 17px; height: 17px; background: #dcdcdc; margin-left: auto; }
.hscroll .bump { position: absolute; left: 423px; top: 4px; width: 88px; height: 15px; margin: 0; }
.pages { height: 100px; padding: 12px 16px; display: flex; gap: 12px; }
.pagethumb { width: 85px; height: 72px; border: 2px solid #8b9096; border-radius: 10px; }
.pagethumb svg { width: 85px; height: 72px; margin: -2px; }
.num { font: 500 12px "Noto Sans", sans-serif; fill: #111; }
.addpage { width: 85px; height: 64px; margin-top: 4px; border-radius: 7px; background: #f1f2f4; display: grid; place-items: center; }
.addpage svg { width: 16px; height: 16px; }
.status { height: 40px; display: flex; align-items: center; padding-left: 16px; font-weight: 500; }
.ni { width: 18px; height: 16px; }
.notes { width: 62px; margin-left: 6px; letter-spacing: .2px; }
.di { width: 20px; height: 14px; }
.duration { width: 309px; margin-left: 6px; letter-spacing: .2px; }
.count { width: 79px; letter-spacing: -.15px; }
.slider { width: 200px; margin-left: 16px; display: flex; align-items: center; }
.slider b { width: 12px; height: 12px; border-radius: 50%; background: #0d1216; margin: 0 2px; }
.done { width: 63px; height: 2px; background: #a5a9af; }
.rest { width: 121px; height: 2px; background: #dfe1e6; }
.zoom { width: 60px; margin-left: 25px; letter-spacing: .7px; }
.end { width: 104px; height: 32px; }
.q { font: 600 14px "Noto Sans", sans-serif; text-anchor: middle; fill: #0d1216; }

/* taskbar */
.taskbar { height: 48px; flex: none; background: #cfe7ee; border-top: 1px solid #a6b5ba; display: flex; align-items: center; font: 400 12px/16px "Open Sans", sans-serif; color: #1b1b1b; padding-left: 19px; }
.sun { width: 24px; height: 22px; margin-top: -2px; }
.weather { width: 290px; margin: -2px 0 0 7px; display: flex; flex-direction: column; font-size: 11.500px; }
.dim { color: #5a6063; }
.win { width: 23px; height: 23px; }
.tsearch { width: 218px; height: 31px; margin-left: 14px; border: 1px solid #b5ccd6; border-radius: 16px; background: #eff7fb; display: flex; align-items: center; padding: 0 4px 0 10px; gap: 10px; color: #5a6063; font-size: 13px; }
.tsearch span { margin-top: -2px; }
.tsearch svg { width: 15px; height: 15px; }
.tsearch .bing { width: 20px; height: 20px; margin-left: auto; }
.apps-row { display: flex; align-items: center; margin-left: 10.500px; gap: 16px; }
.apps-row > svg { width: 28px; height: 28px; }
.apps-row > svg:nth-child(3), .apps-row > svg:last-child { height: 38px; background: radial-gradient(ellipse 3px 1.500px at 50% 36px, #7d868a 90%, transparent); }
.current { width: 38px; height: 40px; margin: 0 -5px; border-radius: 4px; background: linear-gradient(#087bd8, #087bd8) 50% 100% / 16px 3px no-repeat, #e5f2f7; }
.office { font: 700 11px "Open Sans", sans-serif; fill: #fff; text-anchor: middle; }
.mini { font: 400 8px Roboto, sans-serif; fill: #fff; text-anchor: middle; }
.tray { width: 108px; height: 48px; margin-left: 115.500px; }
.clock { width: 66px; margin-top: -2px; display: flex; flex-direction: column; align-items: flex-end; font-size: 11.500px; letter-spacing: .05px; }
.badge { width: 16px; height: 16px; margin: -2px 0 0 10px; border-radius: 50%; background: #0067c0; color: #fff; font-size: 10px; text-align: center; }
```
